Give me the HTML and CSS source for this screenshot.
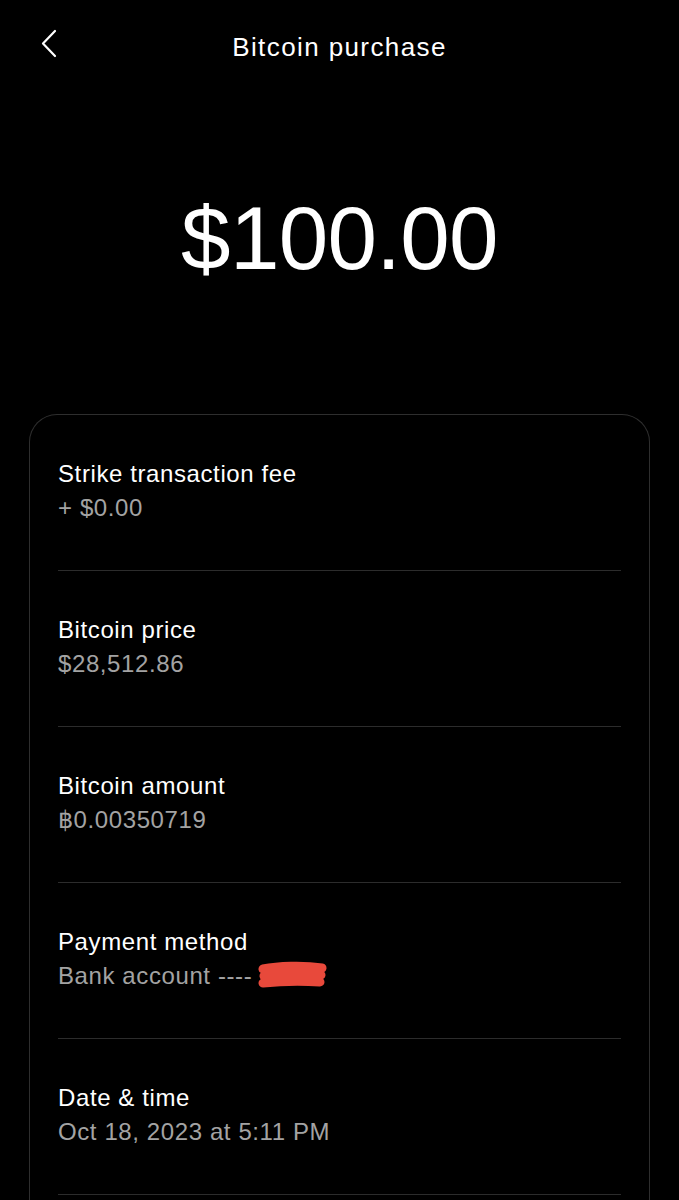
FILE: index.html
```html
<!DOCTYPE html>
<html>
<head>
    <title>Bitcoin purchase</title>
    <link rel="stylesheet" href="styles.css">
</head>
<body>
    <div class="screen">
        <div class="top-bar">
            <button class="back-button" aria-label="Back">
                <svg width="20" height="30" viewBox="0 0 20 30">
                    <polyline points="14,3 2,15.5 14,28" fill="none" stroke="#fff" stroke-width="2.2" stroke-linecap="round" stroke-linejoin="round"/>
                </svg>
            </button>
            <div class="top-title">Bitcoin purchase</div>
        </div>

        <div class="amount">$100.00</div>

        <div class="details-card">
            <div class="detail-row">
                <div class="detail-label">Strike transaction fee</div>
                <div class="detail-value">+ $0.00</div>
            </div>
            <div class="detail-row">
                <div class="detail-label">Bitcoin price</div>
                <div class="detail-value">$28,512.86</div>
            </div>
            <div class="detail-row">
                <div class="detail-label">Bitcoin amount</div>
                <div class="detail-value">&#x0E3F;0.00350719</div>
            </div>
            <div class="detail-row">
                <div class="detail-label">Payment method</div>
                <div class="detail-value">Bank account ----
                    <svg class="scribble" width="70" height="30" viewBox="0 0 70 30">
                        <path d="M5,8 C20,5 45,4 64,7 M6,15 C25,12 45,12 63,14 M5,22 C25,20 45,20 62,21" fill="none" stroke="#e8493b" stroke-width="9" stroke-linecap="round"/>
                    </svg>
                </div>
            </div>
            <div class="detail-row">
                <div class="detail-label">Date &amp; time</div>
                <div class="detail-value">Oct 18, 2023 at 5:11 PM</div>
            </div>
        </div>
    </div>
</body>
</html>
```

FILE: styles.css
```css
body {
    margin: 0;
    background: #000;
    color: #fff;
    font-family: "Liberation Sans", Arial, sans-serif;
    overflow: hidden;
}

.screen {
    width: 679px;
    height: 1200px;
    overflow: hidden;
}

.top-bar {
    position: relative;
    height: 94px;
    display: flex;
    align-items: center;
    justify-content: center;
}

.back-button {
    position: absolute;
    left: 41px;
    top: 28px;
    background: none;
    border: none;
    padding: 0;
    width: 20px;
    height: 30px;
}

.top-title {
    font-size: 26px;
    letter-spacing: 1.4px;
}

.amount {
    text-align: center;
    font-size: 89px;
    letter-spacing: -0.7px;
    line-height: 1;
    margin-top: 100px;
}

.details-card {
    margin: 131px 29px 0 29px;
    border: 1.5px solid #2e2e2e;
    border-bottom: none;
    border-radius: 28px 28px 0 0;
    padding: 0 28px;
    min-height: 900px;
}

.detail-row {
    padding: 42px 0 45px 0;
    border-bottom: 1px solid #2c2c2c;
}

.detail-label {
    font-size: 24px;
    line-height: 34px;
    letter-spacing: 0.6px;
}

.detail-value {
    font-size: 24px;
    line-height: 34px;
    letter-spacing: 0.6px;
    color: #a3a3a3;
    display: flex;
    align-items: center;
    gap: 6px;
}
```
